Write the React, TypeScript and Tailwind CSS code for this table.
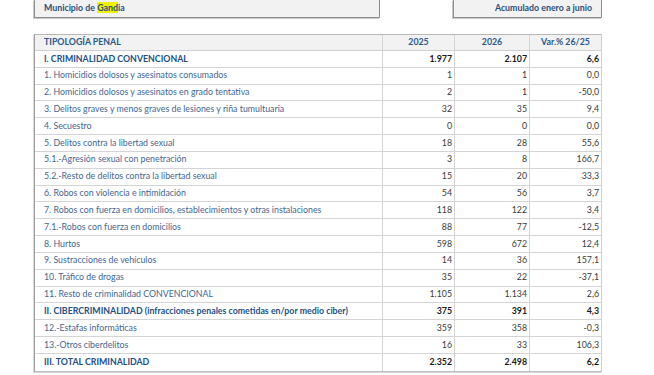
import React from "react";

type Row = { label: string; a: string; b: string; v: string; bold?: boolean };

const rows: Row[] = [
  { label: "I. CRIMINALIDAD CONVENCIONAL", a: "1.977", b: "2.107", v: "6,6", bold: true },
  { label: "1. Homicidios dolosos y asesinatos consumados", a: "1", b: "1", v: "0,0" },
  { label: "2. Homicidios dolosos y asesinatos en grado tentativa", a: "2", b: "1", v: "-50,0" },
  { label: "3. Delitos graves y menos graves de lesiones y riña tumultuaria", a: "32", b: "35", v: "9,4" },
  { label: "4. Secuestro", a: "0", b: "0", v: "0,0" },
  { label: "5. Delitos contra la libertad sexual", a: "18", b: "28", v: "55,6" },
  { label: "5.1.-Agresión sexual con penetración", a: "3", b: "8", v: "166,7" },
  { label: "5.2.-Resto de delitos contra la libertad sexual", a: "15", b: "20", v: "33,3" },
  { label: "6. Robos con violencia e intimidación", a: "54", b: "56", v: "3,7" },
  { label: "7. Robos con fuerza en domicilios, establecimientos y otras instalaciones", a: "118", b: "122", v: "3,4" },
  { label: "7.1.-Robos con fuerza en domicilios", a: "88", b: "77", v: "-12,5" },
  { label: "8. Hurtos", a: "598", b: "672", v: "12,4" },
  { label: "9. Sustracciones de vehículos", a: "14", b: "36", v: "157,1" },
  { label: "10. Tráfico de drogas", a: "35", b: "22", v: "-37,1" },
  { label: "11. Resto de criminalidad CONVENCIONAL", a: "1.105", b: "1.134", v: "2,6" },
  { label: "II. CIBERCRIMINALIDAD (infracciones penales cometidas en/por medio ciber)", a: "375", b: "391", v: "4,3", bold: true },
  { label: "12.-Estafas informáticas", a: "359", b: "358", v: "-0,3" },
  { label: "13.-Otros ciberdelitos", a: "16", b: "33", v: "106,3" },
  { label: "III. TOTAL CRIMINALIDAD", a: "2.352", b: "2.498", v: "6,2", bold: true },
];

export default function App() {
  return (
    <div
      className="w-[654px] h-[375px] bg-white overflow-hidden pl-[34px] text-[8.8px] leading-none"
      style={{ fontFamily: "Lato, 'Noto Sans', sans-serif" }}
    >
      <div className="flex h-[18px]">
        <div className="w-[346px] h-[18px] bg-[#f2f2f2] border-l border-r border-b border-[#8f8f8f] shadow-[-1px_1px_0_#c8c8c8] flex items-center pl-[9px] font-bold text-[#2b4f7a]">
          <span>
            Municipio de <span className="bg-[#eef200]">Gand</span>ia
          </span>
        </div>
        <div className="ml-[73px] w-[149px] h-[18px] bg-[#f2f2f2] border-l border-r border-b border-[#8f8f8f] shadow-[-1px_1px_0_#c8c8c8] flex items-center justify-end pr-[9px] font-bold text-[#2b4f7a]">
          Acumulado enero a junio
        </div>
      </div>
      <div className="mt-[16px] w-[568px] border-l border-[#a0a0a0] border-r border-r-[#d0d0d0] border-b border-b-[#bdbdbd] shadow-[-1px_1px_0_#d8d8d8]">
        <div className="flex h-[17px] bg-[#f2f2f2] border-t border-[#b8b8b8] border-b border-b-[#cfcfcf] font-bold text-[#2b5a8a]">
          <div className="w-[347px] flex items-center pl-[9px]">TIPOLOGÍA PENAL</div>
          <div className="w-[72px] flex items-center justify-center border-l border-[#d4d4d4]">2025</div>
          <div className="w-[75px] flex items-center justify-center border-l border-[#d4d4d4]">2026</div>
          <div className="flex-1 flex items-center justify-center border-l border-[#d4d4d4]">Var.% 26/25</div>
        </div>
        {rows.map((r, i) => (
          <div
            key={i}
            className={
              "flex h-[16.83px] " +
              (i < rows.length - 1 ? "border-b border-[#d4d4d4]" : "")
            }
          >
            <div
              className={
                "w-[347px] flex items-center pl-[9px] whitespace-nowrap " +
                (r.bold ? "font-bold text-[#24507f]" : "text-[#3f6690]")
              }
            >
              {r.label}
            </div>
            <div
              className={
                "w-[72px] flex items-center justify-end pr-[2px] border-l border-[#d4d4d4] " +
                (r.bold ? "font-bold text-[#1a1a1a]" : "text-[#3a3a3a]")
              }
            >
              {r.a}
            </div>
            <div
              className={
                "w-[75px] flex items-center justify-end pr-[2px] border-l border-[#d4d4d4] " +
                (r.bold ? "font-bold text-[#1a1a1a]" : "text-[#3a3a3a]")
              }
            >
              {r.b}
            </div>
            <div
              className={
                "flex-1 flex items-center justify-end pr-[2px] border-l border-[#d4d4d4] " +
                (r.bold ? "font-bold text-[#1a1a1a]" : "text-[#3a3a3a]")
              }
            >
              {r.v}
            </div>
          </div>
        ))}
      </div>
    </div>
  );
}
